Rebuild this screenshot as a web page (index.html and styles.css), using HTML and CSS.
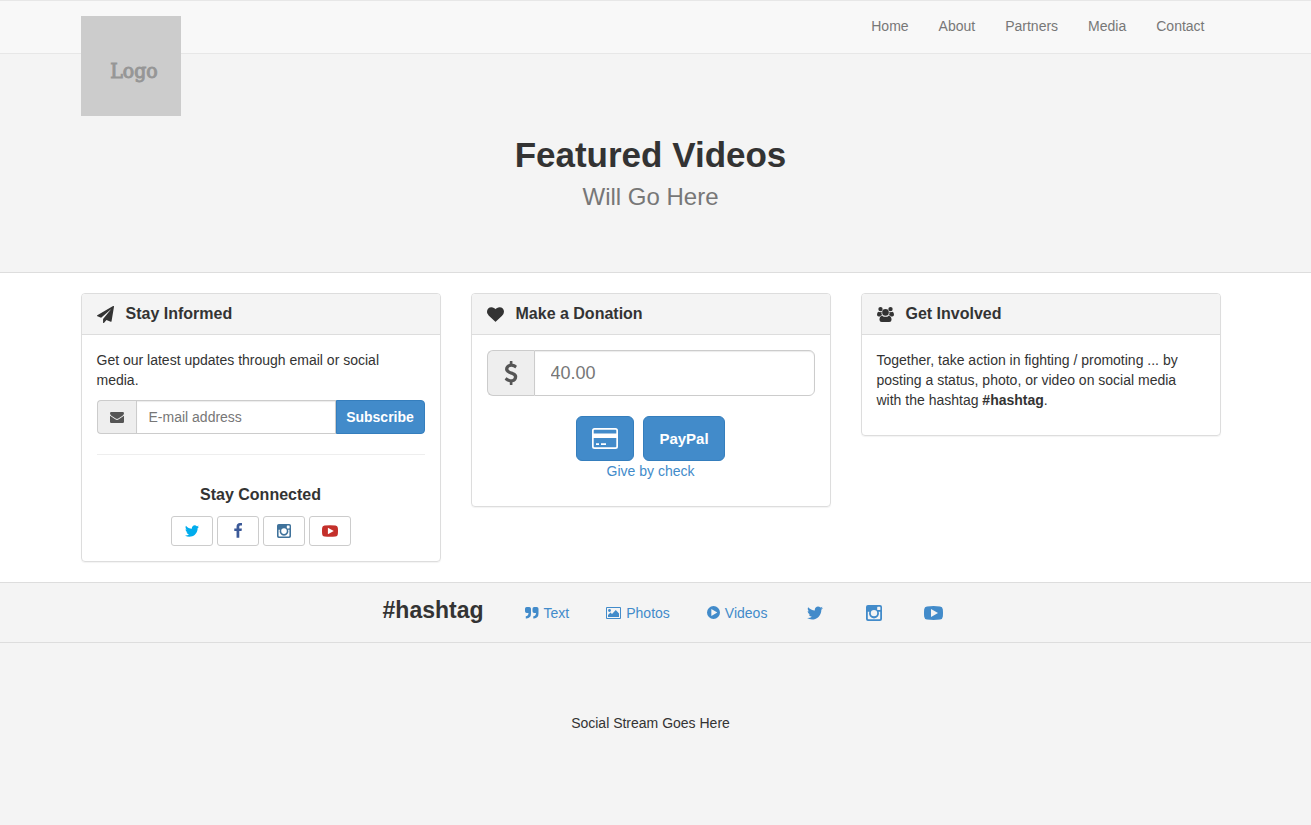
FILE: index.html
```html
<!DOCTYPE html>
<html lang="en">
<head>
<meta charset="utf-8">
<meta name="viewport" content="width=device-width, initial-scale=1">
<title>Featured Videos</title>
<link rel="stylesheet" href="styles.css">
</head>
<body>
<svg class="sprite" aria-hidden="true">
  <symbol id="i-twitter" viewBox="0 0 1792 1792"><path d="M1684 408q-67 98-162 167 1 14 1 42 0 130-38 259.500t-115.500 248.500-184.500 210.500-258 146-323 54.500q-271 0-496-145 35 4 78 4 225 0 401-138-105-2-188-64.500t-114-159.500q33 5 61 5 43 0 85-11-112-23-185.500-111.500t-73.500-205.500v-4q68 38 146 41-66-44-105-115t-39-154q0-88 44-163 121 149 294.500 238.500t371.500 99.500q-8-38-8-74 0-134 94.500-228.500t228.500-94.500q140 0 236 102 109-21 205-78-37 115-142 178 93-10 186-50z"/></symbol>
  <symbol id="i-facebook" viewBox="0 0 1792 1792"><path d="M1343 12v264h-157q-86 0-116 36t-30 108v189h293l-39 296h-254v759h-306v-759h-255v-296h255v-218q0-186 104-288.500t277-102.500q147 0 228 12z"/></symbol>
  <symbol id="i-instagram" viewBox="0 0 16 16"><path fill-rule="evenodd" d="M2 0h12a2 2 0 0 1 2 2v12a2 2 0 0 1-2 2H2a2 2 0 0 1-2-2V2a2 2 0 0 1 2-2zM11.800 1.800a.6.6 0 0 0-.6.6v2a.6.6 0 0 0 .6.6h2a.6.6 0 0 0 .6-.6v-2a.6.6 0 0 0-.6-.6zM1.800 6.700V13.500a.7.700 0 0 0 .7.700h11a.7.700 0 0 0 .7-.7V6.700h-1.500a5 5 0 1 1-9.400 0zM8 4.900a3.200 3.200 0 1 0 0 6.400 3.200 3.200 0 0 0 0-6.400z"/></symbol>
  <symbol id="i-youtube" viewBox="0 0 19 14"><path fill-rule="evenodd" d="M3 .4Q9.500-.3 16 .4q2.500.2 2.800 2.800.4 3.800 0 7.600-.3 2.600-2.800 2.800-6.500.7-13 0Q.5 13.400.2 10.800q-.4-3.800 0-7.600Q.5.600 3 .4zM7 3v8l7-4z"/></symbol>
  <symbol id="i-heart" viewBox="0 0 1792 1792"><path d="M896 1664q-26 0-44-18l-624-602q-10-8-27.500-26t-55.500-65.500-68-97.500-53.500-121-23.500-138q0-220 127-344t351-124q62 0 126.500 21.500t120 58 95.500 68.500 76 68q36-36 76-68t95.500-68.500 120-58 126.500-21.500q224 0 351 124t127 344q0 221-229 450l-623 600q-18 18-44 18z"/></symbol>
  <symbol id="i-plane" viewBox="0 0 1792 1792"><path d="M1764 11q33 24 27 64l-256 1536q-5 29-32 45-14 8-31 8-11 0-24-5l-453-185-242 295q-18 23-49 23-13 0-22-4-19-7-30.500-23.500t-11.500-36.500v-349l864-1059-1069 925-395-162q-37-14-40-55-2-40 32-59l1664-960q15-9 32-9 20 0 36 11z"/></symbol>
  <symbol id="i-users" viewBox="0 0 18 16"><circle cx="3.700" cy="2.300" r="2.300"/><circle cx="14.300" cy="2.300" r="2.300"/><path d="M1.600 5Q3.200 6 5 5.100 4.100 7.800 5.700 8.900 4 9 3.200 10H1.800Q0 10 0 8.300 0 5.400 1.600 5zM16.400 5q-1.600 1-3.400.1.900 2.700-.7 3.800 1.700.1 2.500 1.100h1.400Q18 10 18 8.300 18 5.400 16.400 5z"/><circle cx="9" cy="5.800" r="3.500"/><path d="M5.400 9.200q3.600 2.600 7.200 0 2.800.6 2.800 4.300 0 2.500-2.400 2.500H5q-2.400 0-2.400-2.500 0-3.700 2.800-4.300z"/></symbol>
  <symbol id="i-envelope" viewBox="0 0 14 11"><path d="M1.300 0h11.400Q14 0 14 1.300 14 2.600 12.500 3.700L8.300 6.600Q7 7.400 5.700 6.600L1.400 3.700Q0 2.600 0 1.300 0 0 1.300 0zM0 3.700 5.200 7.300q1.800 1.200 3.600 0L14 3.700v6Q14 11 12.700 11H1.300Q0 11 0 9.700z"/></symbol>
  <symbol id="i-dollar" viewBox="0 0 1792 1792"><path d="M1362 1185q0 153-99.500 263.500t-258.500 136.500v175q0 14-9 23t-23 9h-135q-13 0-22.500-9.500t-9.500-22.500v-175q-66-9-127.500-31t-101.500-44.500-74-48-46.500-37.500-17.500-18q-17-21-2-41l103-135q7-10 23-12 15-2 24 9l2 2q113 99 243 125 37 8 74 8 81 0 142.500-43t61.500-122q0-28-15-53t-33.500-42-58.500-37.500-66-32-80-32.500q-39-16-61.500-25t-61.500-26.500-62.500-31-56.500-35.500-53.500-42.500-43.500-49-35.500-58-21-66.500-8.500-78q0-138 98-242t255-134v-180q0-13 9.500-22.500t22.500-9.500h135q14 0 23 9t9 23v176q57 6 110.500 23t87 33.500 63.500 37.500 39 29 15 14q17 18 5 38l-81 146q-8 15-23 16-14 3-27-7-3-3-14.500-12t-39-26.500-58.500-32-74.500-26-85.500-11.500q-95 0-155 43t-60 111q0 26 8.500 48t29.500 41.500 39.500 33 56 31 60.500 27 70 27.500q53 20 81 31.500t76 35 75.500 42.500 62 50 53 63.500 31.500 76.500 13 94z"/></symbol>
  <symbol id="i-card" viewBox="0 0 26 21"><path fill-rule="evenodd" d="M2.500 0h21A2.500 2.500 0 0 1 26 2.500v16a2.500 2.500 0 0 1-2.500 2.500h-21A2.500 2.500 0 0 1 0 18.500v-16A2.500 2.500 0 0 1 2.500 0zM2.500 1.700q-.8 0-.8.8V5.500h22.600V2.500q0-.8-.8-.8zM1.700 10v8.500q0 .8.800.8h21q.8 0 .8-.8V10zM4 15.300h3V17H4zM9 15.300h5V17H9z"/></symbol>
  <symbol id="i-quote" viewBox="0 0 14 12"><path d="M1.700 0h2.500Q6 0 6 1.800V6.500Q6 11 1.500 11.500H.8V9.300Q3.500 9 3.500 6H1.700Q0 6 0 4.300V1.700Q0 0 1.700 0zM9.200 0h2.500q1.800 0 1.800 1.800V6.500q0 4.500-4.500 5H8.300V9.300Q11 9 11 6H9.200Q7.500 6 7.500 4.300V1.700Q7.500 0 9.200 0z"/></symbol>
  <symbol id="i-photo" viewBox="0 0 15 12"><path fill-rule="evenodd" d="M1 0h13q1 0 1 1v10q0 1-1 1H1q-1 0-1-1V1Q0 0 1 0zM1 1v10h13V1zM2 10V8l2.500-2.500L6 7l3.800-4L13 6.500V10z"/><circle cx="3.500" cy="3.500" r="1.400"/></symbol>
  <symbol id="i-play" viewBox="0 0 12 12"><path fill-rule="evenodd" d="M6 0a6 6 0 1 1 0 12A6 6 0 0 1 6 0zM4 2.800v6.400L9.500 6z"/></symbol>
</svg>

<header class="navbar">
  <div class="container navbar-inner">
    <a class="logo" href="#">Logo</a>
    <nav class="nav" aria-label="Main">
      <a href="#">Home</a>
      <a href="#">About</a>
      <a href="#">Partners</a>
      <a href="#">Media</a>
      <a href="#">Contact</a>
    </nav>
  </div>
</header>

<section class="featured">
  <h1>Featured Videos</h1>
  <p>Will Go Here</p>
</section>

<main class="main">
  <div class="container panels">
    <section class="panel">
      <h2 class="panel-head"><svg class="icon-head"><use href="#i-plane"/></svg>Stay Informed</h2>
      <div class="panel-body">
        <p class="intro">Get our latest updates through email or social media.</p>
        <form class="group">
          <label class="addon" for="email"><svg class="icon-mail" role="img" aria-label="E-mail"><use href="#i-envelope"/></svg></label>
          <input class="field" id="email" type="email" placeholder="E-mail address">
          <button class="subscribe" type="button">Subscribe</button>
        </form>
        <hr>
        <h3>Stay Connected</h3>
        <div class="social">
          <a class="twitter" href="#" aria-label="Twitter"><svg><use href="#i-twitter"/></svg></a>
          <a class="facebook" href="#" aria-label="Facebook"><svg><use href="#i-facebook"/></svg></a>
          <a class="instagram" href="#" aria-label="Instagram"><svg><use href="#i-instagram"/></svg></a>
          <a class="youtube" href="#" aria-label="YouTube"><svg><use href="#i-youtube"/></svg></a>
        </div>
      </div>
    </section>

    <section class="panel">
      <h2 class="panel-head"><svg class="icon-head"><use href="#i-heart"/></svg>Make a Donation</h2>
      <div class="panel-body padded">
        <div class="group large">
          <label class="addon" for="amount"><svg class="icon-dollar" role="img" aria-label="Amount in dollars"><use href="#i-dollar"/></svg></label>
          <input class="field" id="amount" type="text" placeholder="40.00">
        </div>
        <div class="pay">
          <button type="button" aria-label="Credit card"><svg class="icon-card"><use href="#i-card"/></svg></button>
          <button type="button">PayPal</button>
        </div>
        <a class="check" href="#">Give by check</a>
      </div>
    </section>

    <section class="panel">
      <h2 class="panel-head"><svg class="icon-head"><use href="#i-users"/></svg>Get Involved</h2>
      <div class="panel-body padded">
        <p>Together, take action in fighting / promoting ... by posting a status, photo, or video on social media with the hashtag <strong>#hashtag</strong>.</p>
      </div>
    </section>
  </div>
</main>

<section class="hashbar">
  <h2>#hashtag</h2>
  <nav class="filters" aria-label="Hashtag stream">
    <a href="#"><svg class="i-quote"><use href="#i-quote"/></svg>Text</a>
    <a href="#"><svg class="i-photo"><use href="#i-photo"/></svg>Photos</a>
    <a href="#"><svg class="i-play"><use href="#i-play"/></svg>Videos</a>
    <a class="brand" href="#" aria-label="Twitter"><svg class="i-tw"><use href="#i-twitter"/></svg></a>
    <a class="brand" href="#" aria-label="Instagram"><svg class="i-ig"><use href="#i-instagram"/></svg></a>
    <a class="brand" href="#" aria-label="YouTube"><svg class="i-yt"><use href="#i-youtube"/></svg></a>
  </nav>
</section>

<footer class="stream">
  <p>Social Stream Goes Here</p>
</footer>
</body>
</html>
```
FILE: styles.css
```css
* { box-sizing: border-box; }

body {
  margin: 0;
  min-height: 100vh;
  display: flex;
  flex-direction: column;
  background: #fff;
  color: #333;
  font: 14px/20px "Liberation Sans", Arial, sans-serif;
}

h1, h2, h3, p { margin: 0; }
a { color: #428bca; text-decoration: none; }
svg { display: block; flex: none; fill: currentColor; }
.sprite { position: absolute; width: 0; height: 0; }

.navbar, .featured, .main, .hashbar, .stream { padding-right: 10px; }
.container { max-width: 1140px; margin: 0 auto; }

/* Navigation */
.navbar {
  background: #f8f8f8;
  border-top: 1px solid #e7e7e7;
  border-bottom: 1px solid #e7e7e7;
}
.navbar-inner { position: relative; }
.logo {
  position: absolute;
  top: 15px;
  left: 0;
  width: 100px;
  height: 100px;
  padding-left: 7px;
  background: #ccc;
  color: #969696;
  font: 21px/110px "DejaVu Serif Condensed", "DejaVu Serif", serif;
  text-align: center;
  -webkit-text-stroke: 1px #969696;
}
.nav {
  display: flex;
  justify-content: flex-end;
  gap: 30px;
  padding: 15px 16px 17px;
}
.nav a { color: #777; }

/* Featured */
.featured {
  padding-top: 80px;
  padding-bottom: 60px;
  background: #f4f4f4;
  border-bottom: 1px solid #ddd;
  text-align: center;
}
.featured h1 { font-size: 35px; line-height: 42px; }
.featured p { padding-top: 6px; color: #777; font-size: 24px; line-height: 30px; }

/* Panels */
.main { padding-top: 20px; padding-bottom: 20px; }
.panels {
  display: grid;
  grid-template-columns: repeat(3, minmax(0, 1fr));
  align-items: start;
  gap: 30px;
}
.panel {
  border: 1px solid #ddd;
  border-radius: 4px;
  box-shadow: 0 1px 1px rgba(0, 0, 0, .05);
}
.panel-head {
  display: flex;
  align-items: center;
  gap: 12px;
  padding: 10px 15px;
  background: #f4f4f4;
  border-bottom: 1px solid #ddd;
  border-radius: 3px 3px 0 0;
  font-size: 16px;
  line-height: 20px;
}
.icon-head { width: 17px; height: 17px; }
.panel-body { padding: 15px; }
.padded { padding-bottom: 25px; }
.intro { padding: 0 16px 10px 0; }

.group { display: flex; height: 34px; }
.addon {
  display: flex;
  align-items: center;
  justify-content: center;
  width: 39px;
  background: #eee;
  border: 1px solid #ccc;
  border-right: 0;
  border-radius: 4px 0 0 4px;
  color: #555;
}
.field {
  flex: 1;
  min-width: 0;
  padding: 0 12px;
  border: 1px solid #ccc;
  background: #fff;
  box-shadow: inset 0 1px 1px rgba(0, 0, 0, .08);
  color: #555;
  font: inherit;
}
.field::placeholder { color: #777; opacity: 1; }
.icon-mail { width: 14px; height: 11px; }
.subscribe {
  width: 89px;
  padding: 0;
  background: #428bca;
  border: 1px solid #357ebd;
  border-radius: 0 4px 4px 0;
  color: #fff;
  font: bold 14px/20px "Liberation Sans", Arial, sans-serif;
}
hr { margin: 20px 0 30px; border: 0; border-top: 1px solid #eee; }
h3 { font-size: 16px; line-height: 20px; text-align: center; }
.social { display: flex; justify-content: center; gap: 4px; padding-top: 11px; }
.social a {
  display: flex;
  align-items: center;
  justify-content: center;
  width: 42px;
  height: 30px;
  border: 1px solid #ccc;
  border-radius: 3px;
}
.social svg { width: 16px; height: 16px; }
.social .twitter { color: #00aced; }
.social .facebook { color: #3b5998; }
.social .instagram { color: #3f729b; }
.social .instagram svg { width: 14px; height: 14px; }
.social .youtube { color: #c4302b; }
.social .youtube svg { height: 12px; }

.large { height: 46px; font-size: 18px; }
.large .addon { width: 47px; border-radius: 6px 0 0 6px; }
.large .field { padding: 0 16px; border-radius: 0 6px 6px 0; }
.icon-dollar { width: 24px; height: 24px; }
.pay { display: flex; justify-content: center; gap: 9px; padding-top: 20px; }
.pay button {
  height: 45px;
  padding: 0 15px;
  background: #428bca;
  border: 1px solid #357ebd;
  border-radius: 6px;
  color: #fff;
  font: bold 15px/20px "Liberation Sans", Arial, sans-serif;
}
.icon-card { width: 26px; height: 21px; }
.check { display: block; text-align: center; }

/* Hashtag bar */
.hashbar {
  display: flex;
  align-items: center;
  justify-content: center;
  gap: 41px;
  padding-left: 26px;
  background: #f4f4f4;
  border-top: 1px solid #ddd;
  border-bottom: 1px solid #ddd;
}
.hashbar h2 { padding: 13px 0 17px; font-size: 23px; line-height: 29px; }
.filters { display: flex; align-items: center; gap: 37px; }
.filters a { display: flex; align-items: center; justify-content: center; gap: 5px; }
.filters .brand { width: 22px; }
.i-quote { width: 14px; height: 12px; }
.i-photo { width: 15px; height: 12px; }
.i-play { width: 13px; height: 13px; }
.i-tw { width: 18px; height: 18px; }
.i-ig { width: 16px; height: 16px; }
.i-yt { width: 19px; height: 14px; }

/* Stream */
.stream {
  flex: 1;
  padding-top: 70px;
  padding-bottom: 70px;
  background: #f4f4f4;
  text-align: center;
}
```
